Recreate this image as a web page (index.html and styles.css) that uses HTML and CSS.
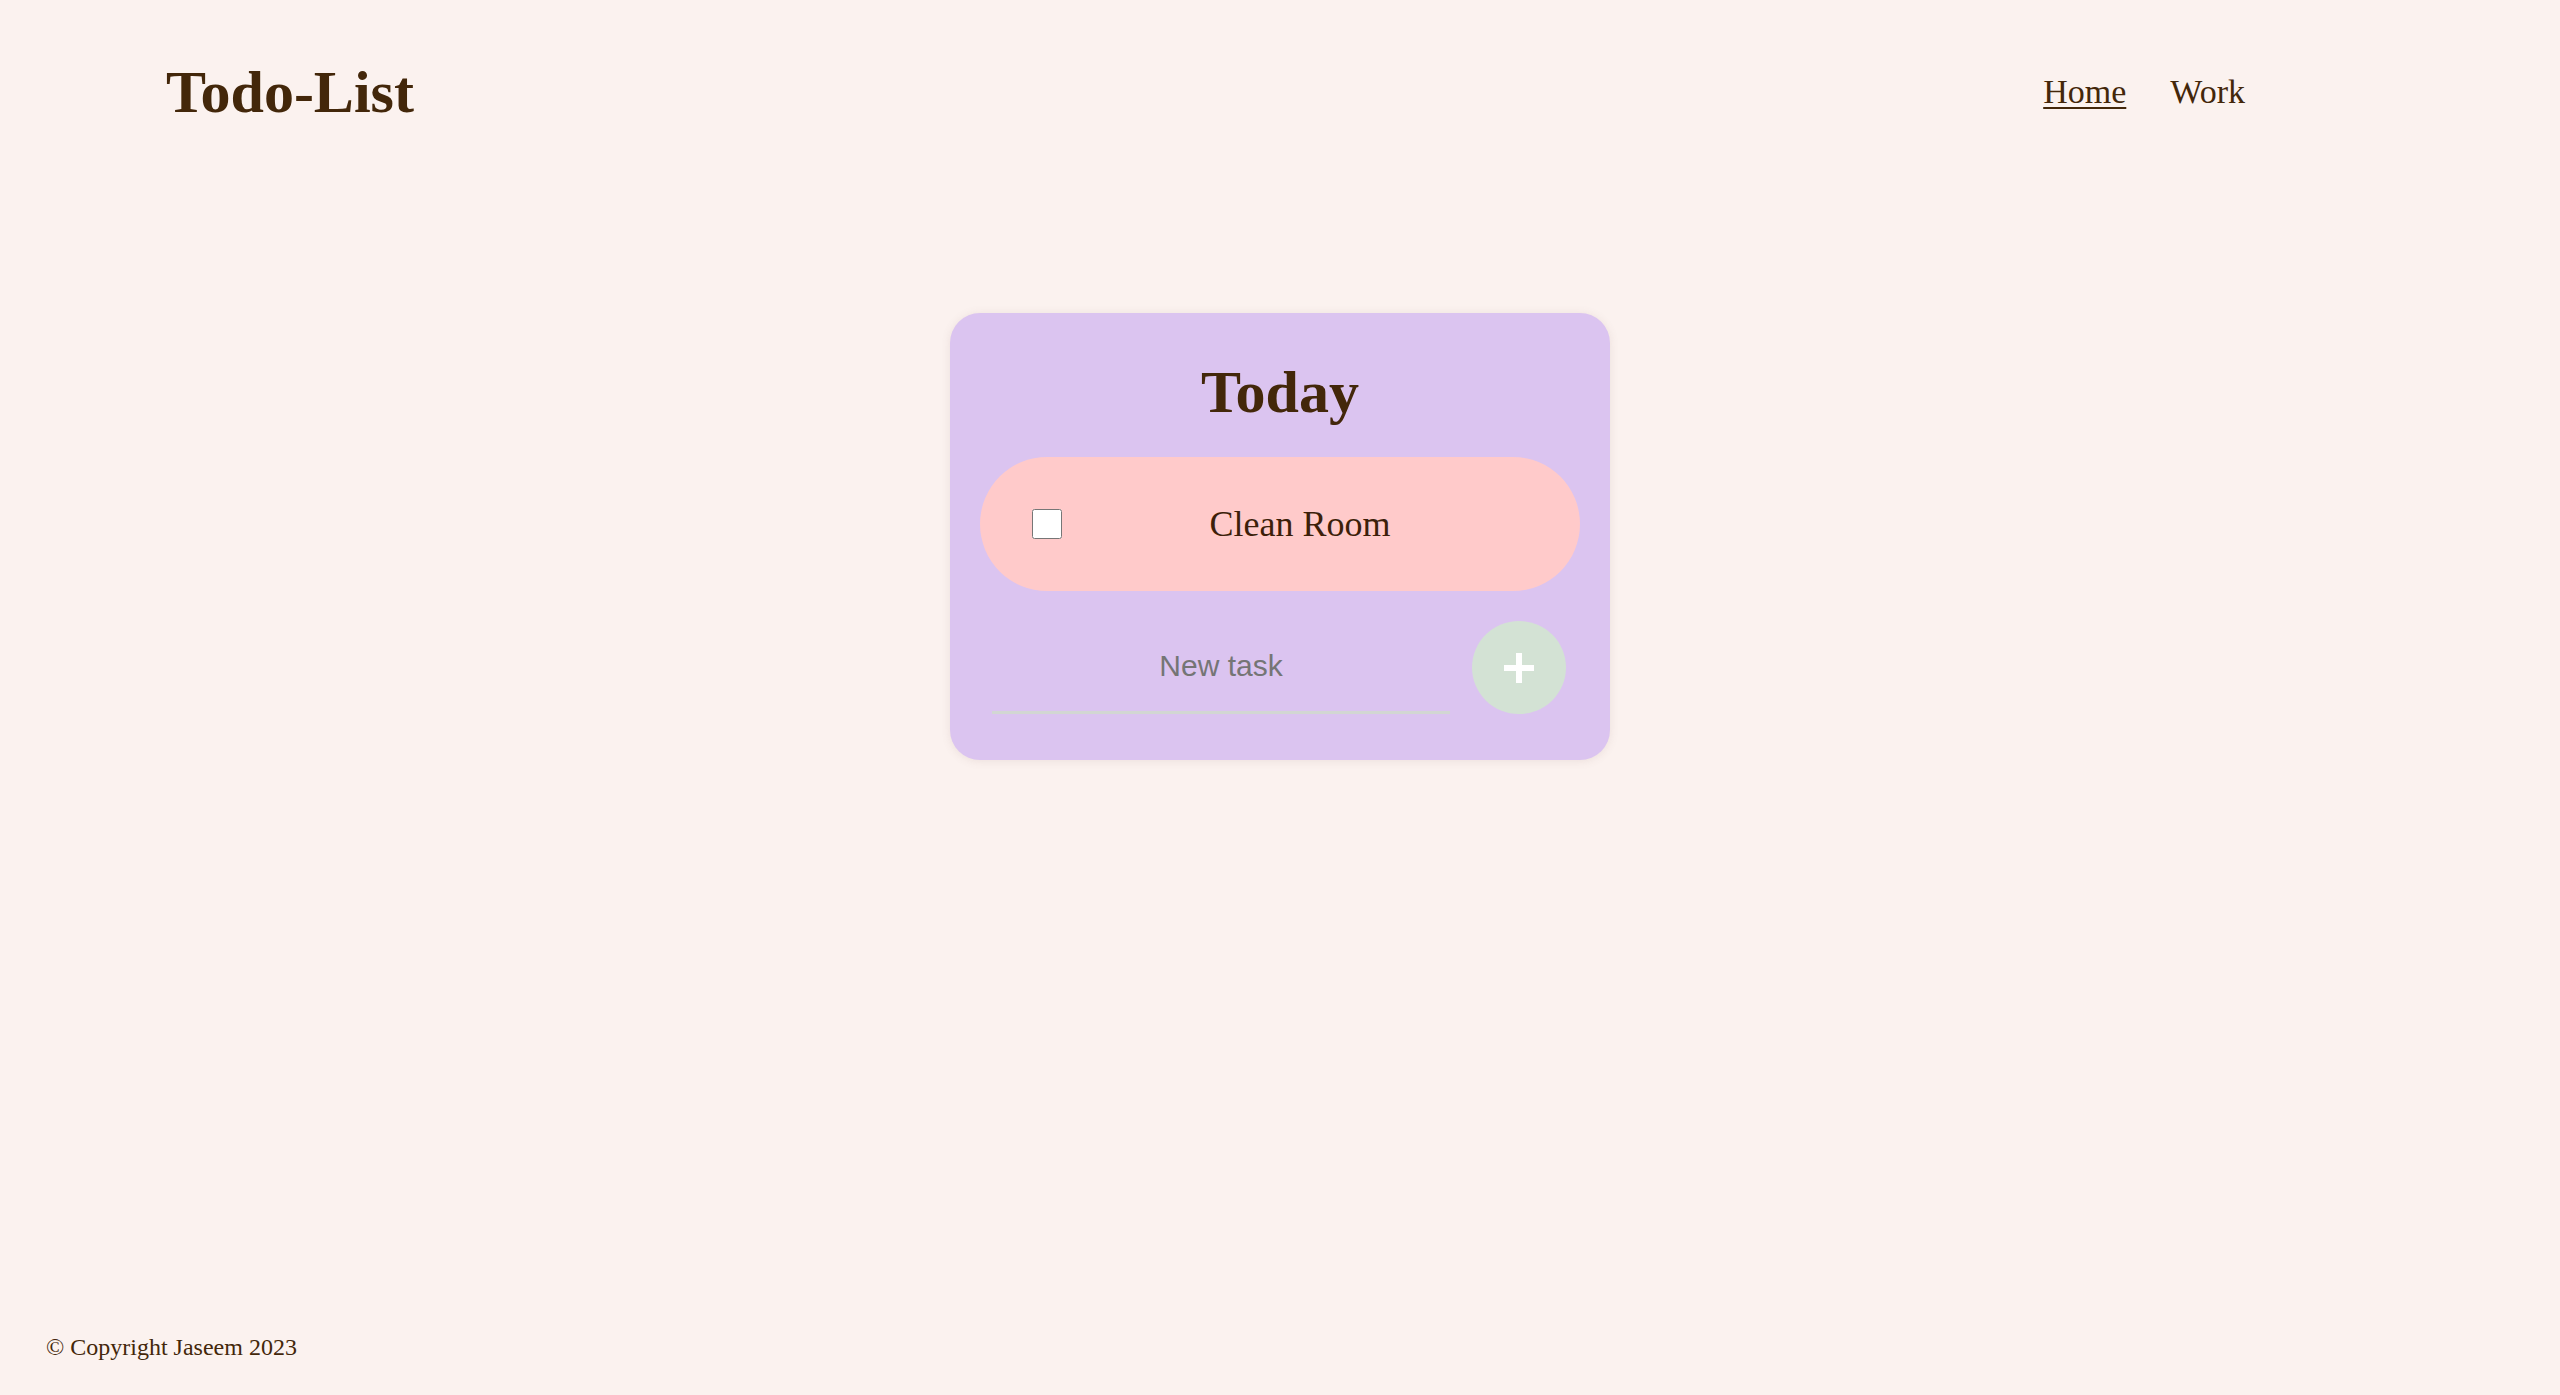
FILE: index.html
```html
<!DOCTYPE html>
<html lang="en">
<head>
<meta charset="utf-8">
<title>Todo-List</title>
<link rel="stylesheet" href="styles.css">
</head>
<body>
  <header class="site-header">
    <h1 class="brand">Todo-List</h1>
    <nav class="nav">
      <a class="nav-link active" href="#">Home</a>
      <a class="nav-link" href="#">Work</a>
    </nav>
  </header>

  <main class="main">
    <section class="card">
      <h2 class="card-title">Today</h2>
      <div class="task">
        <input class="task-check" type="checkbox">
        <p class="task-text">Clean Room</p>
      </div>
      <form class="new-task" onsubmit="return false;">
        <input class="new-input" type="text" placeholder="New task" autocomplete="off">
        <button class="add-btn" type="submit" aria-label="Add">
          <svg width="30" height="30" viewBox="0 0 30 30" aria-hidden="true">
            <rect x="12" y="0" width="6" height="30" fill="#ffffff"/>
            <rect x="0" y="12" width="30" height="6" fill="#ffffff"/>
          </svg>
        </button>
      </form>
    </section>
  </main>

  <footer class="site-footer">© Copyright Jaseem 2023</footer>
</body>
</html>
```
FILE: styles.css
```css
html, body {
  margin: 0;
  padding: 0;
}

body {
  background: #fbf2ef;
  color: #43270a;
  font-family: "Liberation Serif", "Times New Roman", serif;
  min-height: 100vh;
  display: flex;
  flex-direction: column;
}

.site-header {
  height: 184px;
  display: flex;
  align-items: center;
  justify-content: space-between;
  padding: 0 315px 0 166px;
}

.brand {
  margin: 0;
  font-size: 60px;
  line-height: 1;
  font-weight: bold;
}

.nav {
  display: flex;
  gap: 44px;
}

.nav-link {
  font-size: 34px;
  line-height: 1;
  color: #43270a;
  text-decoration: none;
}

.nav-link.active {
  text-decoration: underline;
  text-decoration-thickness: 2px;
  text-underline-offset: 4px;
}

.main {
  display: flex;
  justify-content: center;
  padding-top: 129px;
}

.card {
  width: 660px;
  box-sizing: border-box;
  background: #dbc4f0;
  border-radius: 30px;
  box-shadow: 0 1px 10px rgba(120, 90, 90, 0.12);
  padding: 49px 30px 46px;
}

.card-title {
  margin: 0 0 35px;
  font-size: 60px;
  line-height: 1;
  font-weight: bold;
  text-align: center;
}

.task {
  height: 134px;
  background: #ffcaca;
  border-radius: 67px;
  display: flex;
  align-items: center;
  padding: 0 52px;
}

.task-check {
  width: 30px;
  height: 30px;
  margin: 0;
  flex: none;
}

.task-text {
  flex: 1;
  margin: 0;
  padding-left: 10px;
  text-align: center;
  font-size: 36px;
  line-height: 1;
  color: #3d1f0a;
}

.new-task {
  display: flex;
  gap: 22px;
  padding: 0 14px 0 12px;
  margin-top: 30px;
}

.new-input {
  flex: 1;
  min-width: 0;
  height: 93px;
  box-sizing: border-box;
  border: none;
  border-bottom: 3px solid #d2d6d3;
  background: transparent;
  font-family: "Liberation Sans", Arial, sans-serif;
  font-size: 30px;
  text-align: center;
  color: #43270a;
  outline: none;
  padding: 0;
}

.new-input::placeholder {
  color: #757575;
}

.add-btn {
  width: 94px;
  height: 93px;
  flex: none;
  border: none;
  border-radius: 50%;
  background: #d3e2d4;
  display: flex;
  align-items: center;
  justify-content: center;
  padding: 0;
  cursor: pointer;
}

.site-footer {
  margin-top: auto;
  padding: 0 0 34px 46px;
  font-size: 24px;
  color: #43270a;
}
```
